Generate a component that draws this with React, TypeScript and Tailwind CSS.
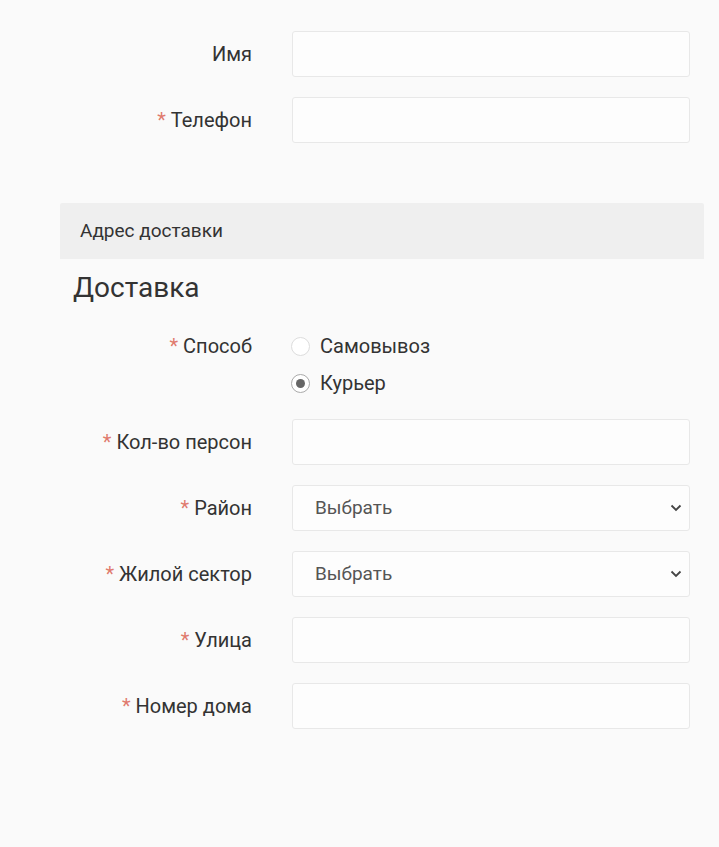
import React from 'react';

const font = { fontFamily: 'Roboto, "Liberation Sans", sans-serif' };

function Label({ text, required }: { text: string; required?: boolean }) {
  return (
    <div className="w-[192px] shrink-0 text-right text-[20px] text-[#333]">
      {required && <span className="text-[#e07a6e] mr-[5px]">*</span>}
      {text}
    </div>
  );
}

function InputRow({ label, required, className = '' }: { label: string; required?: boolean; className?: string }) {
  return (
    <div className={`flex items-center gap-[40px] ${className}`}>
      <Label text={label} required={required} />
      <div className="w-[398px] h-[46px] bg-[#fdfdfd] border border-[#e8e8e8] rounded-[3px]"></div>
    </div>
  );
}

function SelectRow({ label, className = '' }: { label: string; className?: string }) {
  return (
    <div className={`flex items-center gap-[40px] ${className}`}>
      <Label text={label} required />
      <div className="w-[398px] h-[46px] bg-[#fdfdfd] border border-[#e8e8e8] rounded-[3px] flex items-center justify-between pl-[22px] pr-[7px]">
        <span className="text-[19px] text-[#555]">Выбрать</span>
        <svg width="12" height="8" viewBox="0 0 12 8" fill="none">
          <path d="M1.5 1.5 L6 6 L10.5 1.5" stroke="#444" strokeWidth="1.8" />
        </svg>
      </div>
    </div>
  );
}

function Radio({ label, checked }: { label: string; checked?: boolean }) {
  return (
    <div className="flex items-center h-[24px]">
      <div
        className={`w-[19px] h-[19px] rounded-full bg-white border flex items-center justify-center ${
          checked ? 'border-[#aaa]' : 'border-[#ddd]'
        }`}
      >
        {checked && <div className="w-[9px] h-[9px] rounded-full bg-[#666]"></div>}
      </div>
      <span className="ml-[10px] text-[20px] text-[#333]">{label}</span>
    </div>
  );
}

export default function App() {
  return (
    <div className="min-h-screen bg-[#fafafa]" style={font}>
      <div className="pl-[60px] pr-[15px] pt-[31px]">
        <InputRow label="Имя" />
        <InputRow label="Телефон" required className="mt-[20px]" />

        {/* Адрес доставки */}
        <div className="mt-[60px] h-[56px] bg-[#efefef] rounded-t-[2px] flex items-center pl-[20px] text-[19px] text-[#333]">
          Адрес доставки
        </div>
        <div className="h-[58px] flex items-center pl-[13px] text-[28px] text-[#333]">Доставка</div>

        <div className="flex gap-[40px] mt-[17px]">
          <div className="h-[24px] flex items-center">
            <Label text="Способ" required />
          </div>
          <div className="flex flex-col gap-[13px] -ml-[1px]">
            <Radio label="Самовывоз" />
            <Radio label="Курьер" checked />
          </div>
        </div>

        <InputRow label="Кол-во персон" required className="mt-[24px]" />
        <SelectRow label="Район" className="mt-[20px]" />
        <SelectRow label="Жилой сектор" className="mt-[20px]" />
        <InputRow label="Улица" required className="mt-[20px]" />
        <InputRow label="Номер дома" required className="mt-[20px]" />
      </div>
    </div>
  );
}
